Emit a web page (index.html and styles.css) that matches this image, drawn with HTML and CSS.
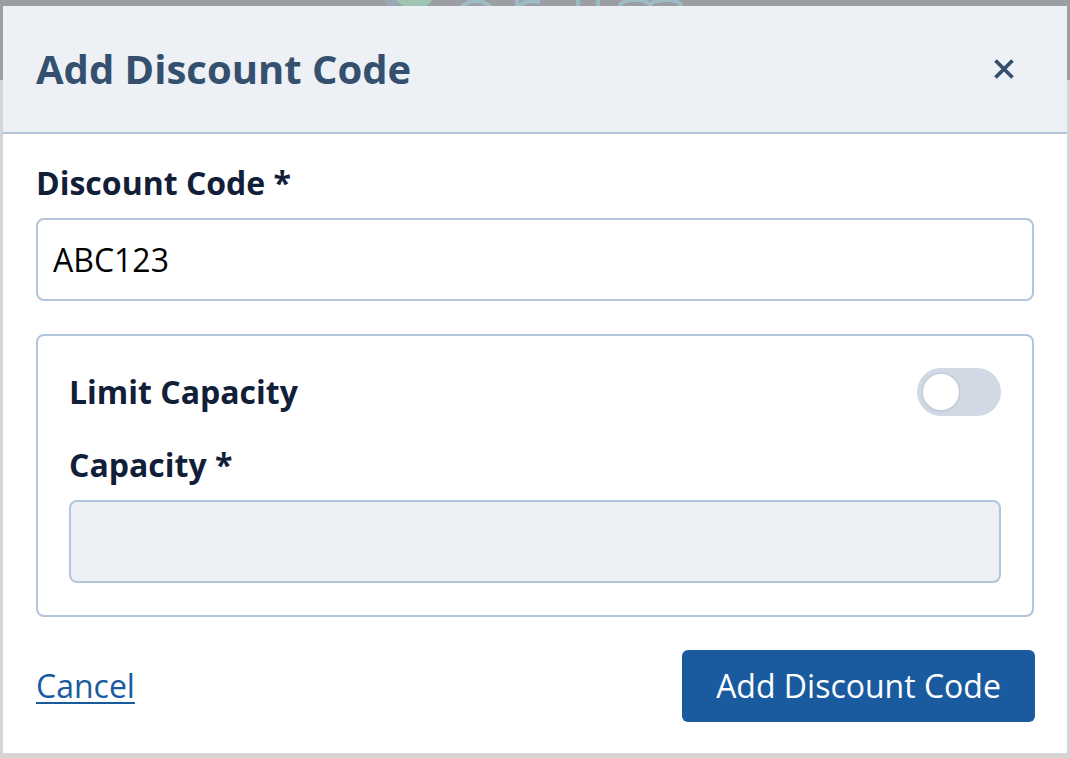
FILE: index.html
```html
<!DOCTYPE html>
<html lang="en">
<head>
<meta charset="utf-8">
<title>Add Discount Code</title>
<link rel="stylesheet" href="styles.css">
</head>
<body>
<div class="backdrop">
  <div class="page-peek" aria-hidden="true">
    <svg width="1070" height="6" viewBox="0 0 1070 6">
      <rect x="385" y="-10" width="16" height="16" rx="6" fill="#97a9b3"/>
      <rect x="397" y="-10" width="35" height="16" rx="8" fill="#9ec5b1"/>
      <circle cx="476" cy="22" r="21" stroke="#9cbcc6" stroke-width="4" fill="none"/>
      <path d="M517 6 V0 M517 12 C517 2 530 0 540 2" stroke="#9cbcc6" stroke-width="4" fill="none"/>
      <path d="M578 0 V6 M598 0 V6" stroke="#9cbcc6" stroke-width="4" fill="none"/>
      <path d="M620 6 C620 -2 650 -2 650 6 M650 6 C650 -2 681 -2 681 6" stroke="#9cbcc6" stroke-width="4" fill="none"/>
    </svg>
  </div>
  <div class="modal" role="dialog" aria-labelledby="modal-title">
    <header class="modal-header">
      <h1 id="modal-title" class="modal-title">Add Discount Code</h1>
      <button class="close-btn" type="button" aria-label="Close">
        <svg width="20" height="20" viewBox="0 0 20 20" aria-hidden="true">
          <path d="M1.5 1.5 L18.5 18.5 M18.5 1.5 L1.5 18.5" stroke="#34506e" stroke-width="3.8" stroke-linecap="butt" fill="none"/>
        </svg>
      </button>
    </header>
    <div class="modal-body">
      <label class="field-label" for="code">Discount Code *</label>
      <input id="code" class="text-input" type="text" value="ABC123">
      <div class="capacity-box">
        <div class="toggle-row">
          <span class="row-label">Limit Capacity</span>
          <span class="toggle" role="switch" aria-checked="false"><span class="knob"></span></span>
        </div>
        <label class="field-label cap-label" for="cap">Capacity *</label>
        <input id="cap" class="text-input disabled-input" type="text" disabled>
      </div>
    </div>
    <footer class="modal-footer">
      <a class="cancel-link" href="#">Cancel</a>
      <button class="primary-btn" type="button">Add Discount Code</button>
    </footer>
  </div>
</div>
</body>
</html>
```

FILE: styles.css
```css
* { box-sizing: border-box; }

html, body {
  margin: 0;
  padding: 0;
}

body {
  width: 1070px;
  height: 758px;
  overflow: hidden;
  font-family: "Open Sans", "Liberation Sans", sans-serif;
  background: linear-gradient(to bottom, #9b9ea3 0, #9b9ea3 80px, #d5d5d5 80px, #d5d5d5 100%);
}

.backdrop {
  padding: 0 3px 5px 3px;
}

.page-peek {
  height: 6px;
  margin: 0 -3px;
  overflow: hidden;
  line-height: 0;
}

.modal {
  width: 1064px;
  height: 747px;
  background: #ffffff;
  display: flex;
  flex-direction: column;
}

.modal-header {
  height: 128px;
  background: #edf0f5;
  border-bottom: 2px solid #b0c3d7;
  display: flex;
  align-items: center;
  justify-content: space-between;
  padding: 0 33px;
}

.modal-title {
  margin: 0;
  font-size: 40px;
  line-height: 48px;
  font-weight: 700;
  color: #34506e;
}

.close-btn {
  width: 60px;
  height: 60px;
  border: 0;
  background: transparent;
  padding: 0;
  display: flex;
  align-items: center;
  justify-content: center;
  cursor: pointer;
}

.modal-body {
  padding: 25px 33px 0 33px;
  display: flex;
  flex-direction: column;
}

.field-label {
  display: block;
  font-size: 32px;
  line-height: 48px;
  font-weight: 700;
  color: #112038;
  margin-bottom: 11px;
}

.text-input {
  display: block;
  width: 100%;
  height: 83px;
  border: 2px solid #b3c5d9;
  border-radius: 8px;
  padding: 0 15px;
  font-family: "Open Sans", "Liberation Sans", sans-serif;
  font-size: 32px;
  color: #000000;
  background: #ffffff;
  outline: none;
}

.disabled-input {
  background: #edf0f5;
}

.capacity-box {
  margin-top: 33px;
  border: 2px solid #b3c5d9;
  border-radius: 8px;
  padding: 32px 32px 32px 31px;
}

.toggle-row {
  display: flex;
  align-items: center;
  justify-content: space-between;
  height: 48px;
}

.row-label {
  font-size: 32px;
  line-height: 48px;
  font-weight: 700;
  color: #112038;
}

.toggle {
  width: 84px;
  height: 48px;
  border-radius: 24px;
  background: #d2d9e5;
  display: flex;
  align-items: center;
  padding-left: 6px;
  margin-right: -1px;
}

.knob {
  width: 36px;
  height: 36px;
  border-radius: 50%;
  background: #ffffff;
  box-shadow: 0 0 0 1.5px #c3cdda, 0 1px 2px rgba(60, 80, 110, 0.25);
}

.cap-label {
  margin-top: 25px;
}

.disabled-input.text-input {
  width: calc(100% + 1px);
}

.modal-footer {
  margin-top: 33px;
  padding: 0 32px 31px 33px;
  display: flex;
  align-items: center;
  justify-content: space-between;
}

.cancel-link {
  font-size: 32px;
  line-height: 48px;
  color: #1a5b9f;
  text-decoration: underline;
  text-decoration-thickness: 2px;
  text-underline-offset: 4px;
}

.primary-btn {
  height: 72px;
  width: 353px;
  border: 0;
  border-radius: 6px;
  background: #1a5b9f;
  color: #ffffff;
  font-family: "Open Sans", "Liberation Sans", sans-serif;
  font-size: 32px;
  line-height: 48px;
  padding: 0;
  cursor: pointer;
}
```
